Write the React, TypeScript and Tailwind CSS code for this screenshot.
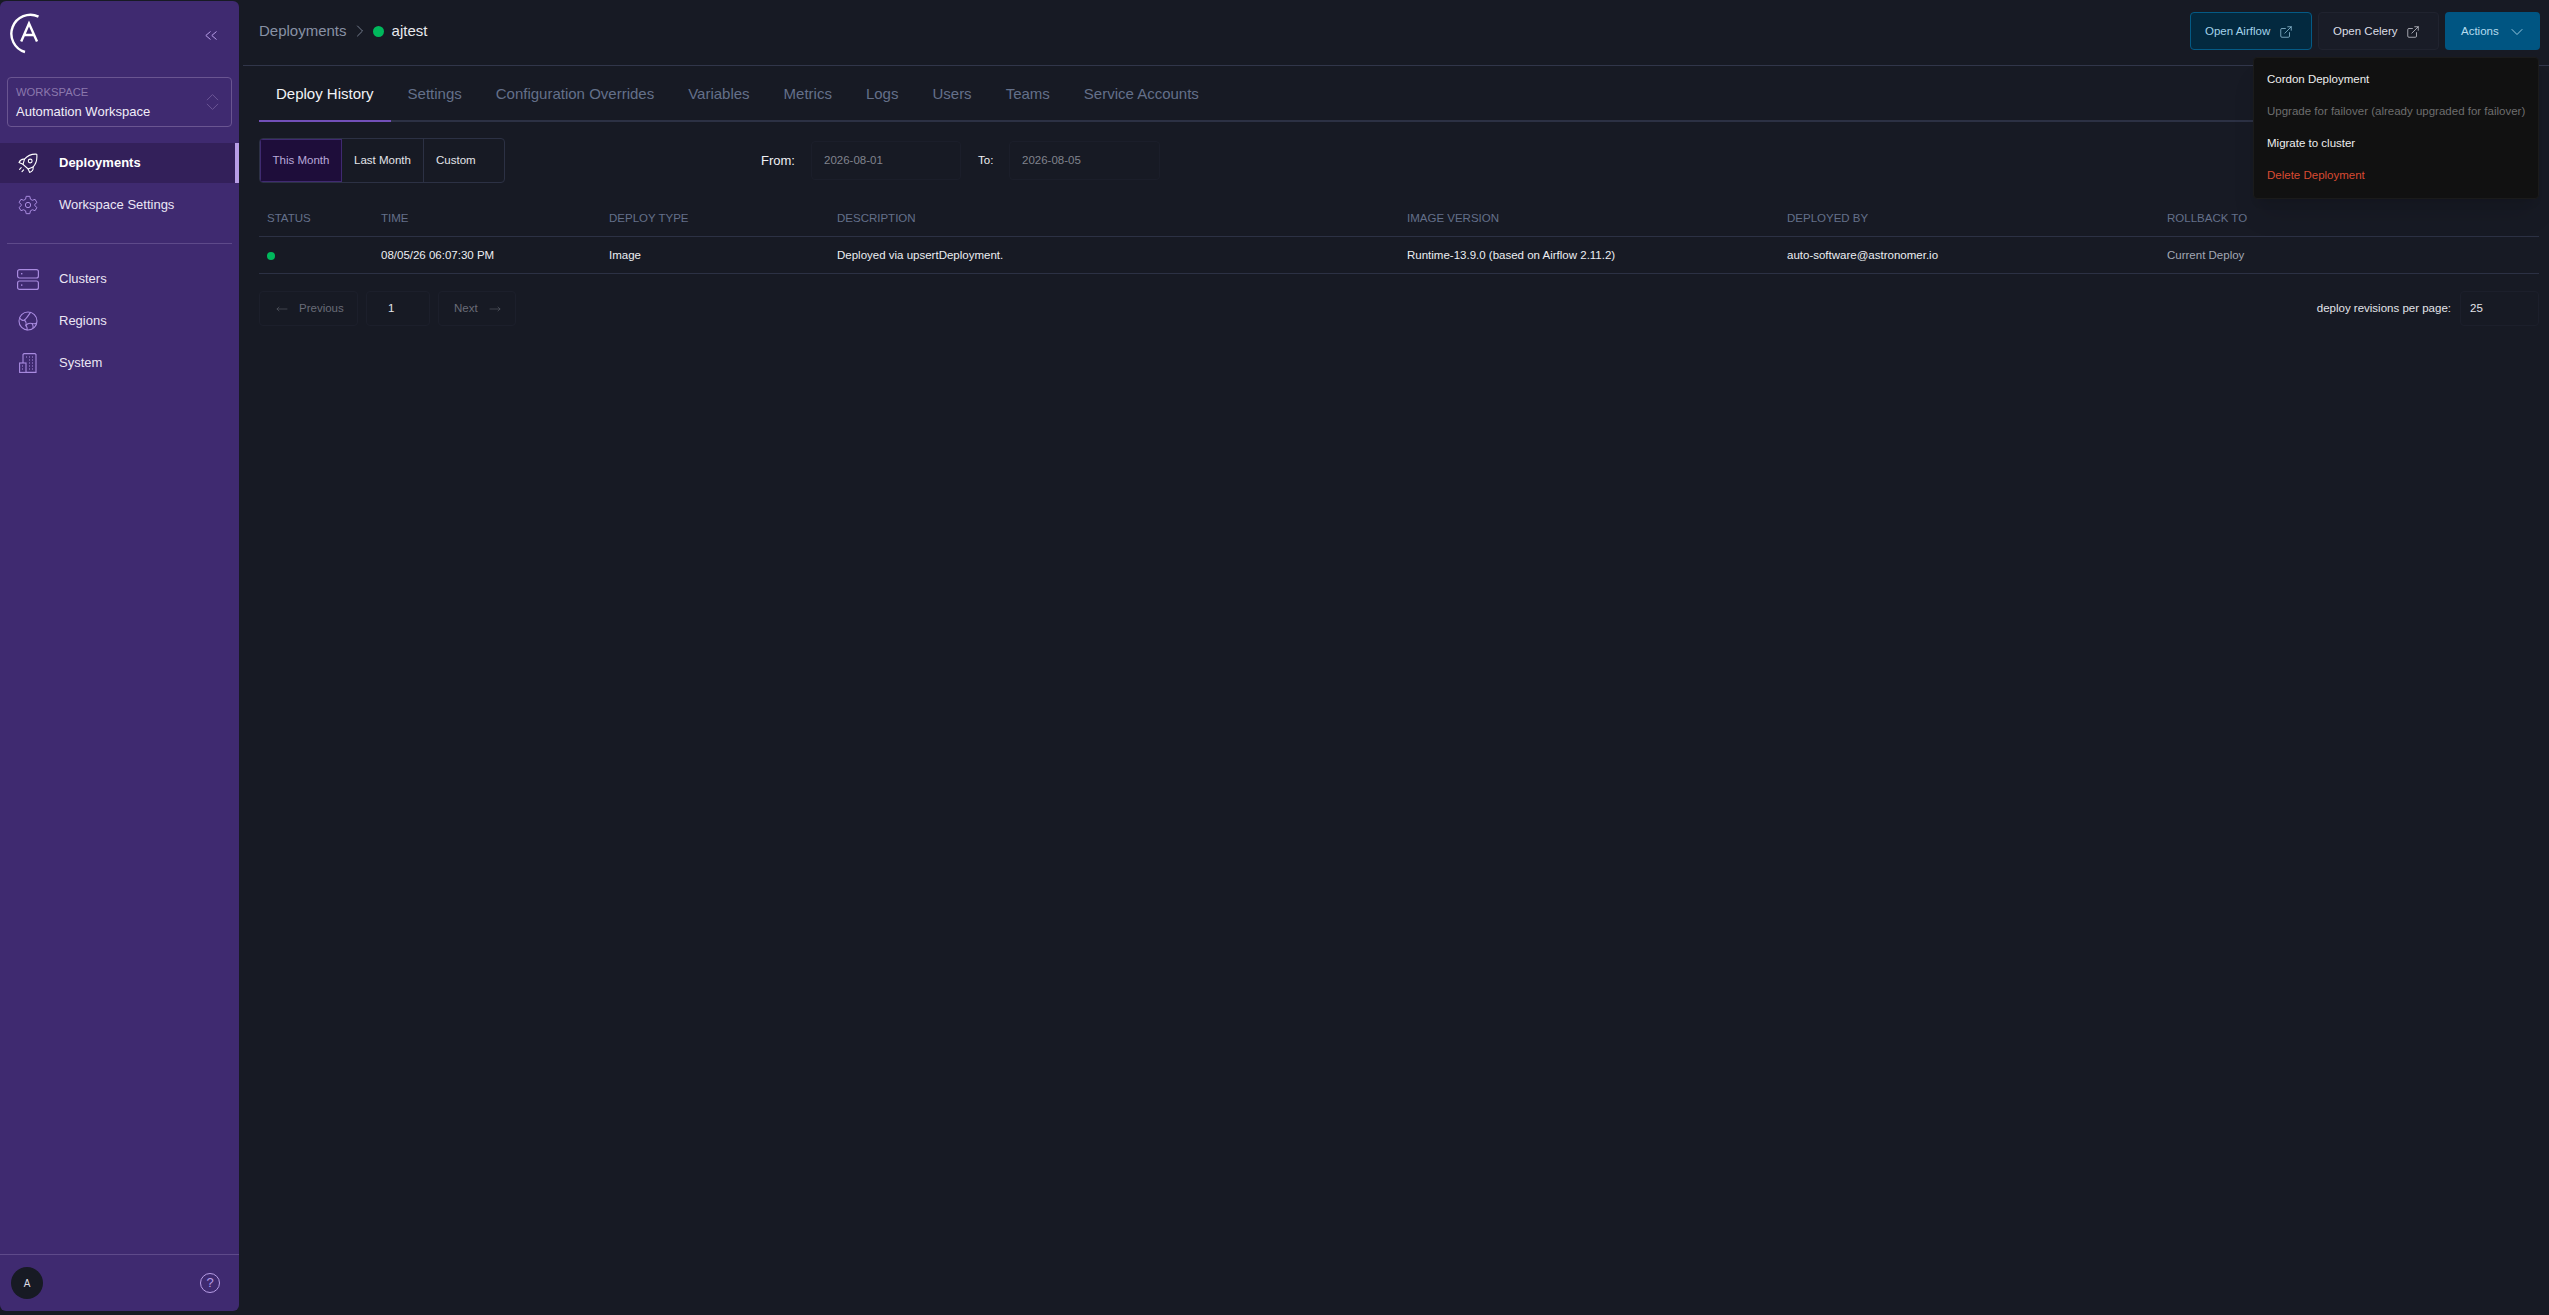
import React from 'react';
import { ChevronRight, ChevronDown, ExternalLink, MoveLeft, MoveRight } from 'lucide-react';

const tabs = ['Deploy History', 'Settings', 'Configuration Overrides', 'Variables', 'Metrics', 'Logs', 'Users', 'Teams', 'Service Accounts'];
const columns = ['Status', 'Time', 'Deploy Type', 'Description', 'Image Version', 'Deployed By', 'Rollback To'];

const Logo = () => (
  <svg width="34" height="42" viewBox="0 0 34 42" fill="none" stroke="white" strokeWidth="2.4">
    <path d="M 30.5 3.6 A 19 19 0 1 0 17 39" />
    <path d="M 13.2 28.4 L 21 10.5 L 29 28.4 M 15.5 22 L 26.8 22" strokeWidth="2.4" />
  </svg>
);

const CollapseIcon = () => (
  <svg width="12" height="9" viewBox="0 0 12 9" fill="none" stroke="#b79de6" strokeWidth="1">
    <path d="M 5.5 0.5 L 0.8 4.5 L 5.5 8.5 M 11.5 0.5 L 6.8 4.5 L 11.5 8.5" />
  </svg>
);

const RocketIcon = () => (
  <svg width="20" height="20" viewBox="0 0 20 20" fill="none" stroke="currentColor" strokeWidth="1.1" strokeLinejoin="round" strokeLinecap="round">
    <path d="M 18.8 1.2 C 13.5 0.8 9.5 2.6 6.5 6.2 L 5 11.3 L 10.2 16 L 15 14 C 18 11 19.3 6.5 18.8 1.2 Z" />
    <path d="M 6.5 6.2 C 4 5.8 2.2 7 1 9.5 L 5 11.3" />
    <path d="M 15 14 C 15.6 16.5 14.2 18.4 11.6 19.4 L 10.2 16" />
    <circle cx="12.2" cy="8" r="1.9" />
    <path d="M 3.2 14.6 L 1.6 16.4 M 5.6 16.8 L 4 18.6" />
  </svg>
);

const GearIcon = () => (
  <svg width="20" height="20" viewBox="0 0 24 24" fill="none" stroke="currentColor" strokeWidth="1.2" strokeLinejoin="round">
    <path d="M 9.8 1.6 H 14.2 L 14.9 5 L 17.2 6.3 L 20.5 5.2 L 22.7 9 L 20.1 11.3 V 12.7 L 22.7 15 L 20.5 18.8 L 17.2 17.7 L 14.9 19 L 14.2 22.4 H 9.8 L 9.1 19 L 6.8 17.7 L 3.5 18.8 L 1.3 15 L 3.9 12.7 V 11.3 L 1.3 9 L 3.5 5.2 L 6.8 6.3 L 9.1 5 Z" />
    <circle cx="12" cy="12" r="3.2" />
  </svg>
);

const ClustersIcon = () => (
  <svg width="22" height="22" viewBox="0 0 22 22" fill="none" stroke="currentColor" strokeWidth="1.2">
    <rect x="0.6" y="1.6" width="20.8" height="8.4" rx="2" />
    <rect x="0.6" y="13" width="20.8" height="8.4" rx="2" />
    <rect x="4" y="5" width="1.4" height="1.4" fill="currentColor" stroke="none" />
    <rect x="4" y="16.4" width="1.4" height="1.4" fill="currentColor" stroke="none" />
  </svg>
);

const GlobeIcon = () => (
  <svg width="20" height="20" viewBox="0 0 20 20" fill="none" stroke="currentColor" strokeWidth="1.1" strokeLinecap="round">
    <circle cx="10" cy="10" r="9" />
    <path d="M 1.8 7 C 3 9 5 10 6.5 9 C 8.5 7.5 10 5 12.5 1.4" />
    <path d="M 6.5 9 C 8 10.5 8.5 12 8 14 C 9.5 12.5 12 12 14 12.5 C 16 13 17.5 13 18.6 12" />
    <path d="M 8 14 C 9 16 9.5 17.5 9 19" />
    <path d="M 14 12.5 C 15 14 15.3 15.5 15 17" />
  </svg>
);

const BuildingIcon = () => (
  <svg width="18" height="20" viewBox="0 0 18 20" fill="none" stroke="currentColor" strokeWidth="1.1">
    <path d="M 4 10 V 1.6 L 5 0.6 H 16 L 17 1.6 V 19.4 H 7" />
    <rect x="0.6" y="10" width="6.4" height="9.4" />
    <g fill="currentColor" stroke="none">
      <rect x="7" y="3.5" width="1" height="1" /><rect x="10" y="3.5" width="1" height="1" /><rect x="13" y="3.5" width="1" height="1" />
      <rect x="10" y="6.5" width="1" height="1" /><rect x="13" y="6.5" width="1" height="1" />
      <rect x="10" y="9.5" width="1" height="1" /><rect x="13" y="9.5" width="1" height="1" />
      <rect x="10" y="12.5" width="1" height="1" /><rect x="13" y="12.5" width="1" height="1" />
      <rect x="10" y="15.5" width="1" height="1" /><rect x="13" y="15.5" width="1" height="1" />
      <rect x="3" y="12.5" width="1" height="1" /><rect x="3" y="15.5" width="1" height="1" />
    </g>
  </svg>
);

const NavItem = ({ icon, label, active }: { icon: React.ReactNode; label: string; active?: boolean }) => (
  <div className={`flex h-10 items-center ${active ? 'border-r-4 border-[#b79de6] bg-[#33205a] font-bold text-white' : 'text-[#ebe6f5]'}`}>
    <div className={`flex w-[59px] shrink-0 justify-center pr-1 ${active ? 'text-white' : 'text-[#a98be0]'}`}>{icon}</div>
    <span className="text-[13px]">{label}</span>
  </div>
);

const App = () => {
  return (
    <div className="flex h-[1315px] w-[2549px] overflow-hidden bg-[#171a24] font-['Liberation_Sans',sans-serif] text-white antialiased">
      {/* Sidebar */}
      <aside className="mt-px mb-[4px] flex w-[239px] shrink-0 flex-col rounded-md bg-[#3f2a70]">
        <div className="flex h-[76px] items-start justify-between pt-3 pl-2 pr-[22px]">
          <Logo />
          <div className="mt-[18px]"><CollapseIcon /></div>
        </div>
        <div className="mx-[7px] flex h-[50px] items-center justify-between rounded border border-[#6a5591] pl-2 pr-3">
          <div>
            <div className="text-[11.25px] leading-4 text-[#8b78ad]">WORKSPACE</div>
            <div className="mt-1 text-[13px] leading-4 text-[#f1edf8]">Automation Workspace</div>
          </div>
          <svg width="13" height="18" viewBox="0 0 14 18" fill="none" stroke="#6f5a98" strokeWidth="1">
            <path d="M 1 7 L 7 1 L 13 7 M 1 11 L 7 17 L 13 11" />
          </svg>
        </div>
        <nav className="mt-4 flex flex-col gap-[2px]">
          <NavItem icon={<RocketIcon />} label="Deployments" active />
          <NavItem icon={<GearIcon />} label="Workspace Settings" />
        </nav>
        <div className="mx-[7px] mt-[18px] mb-[15px] h-px bg-[#5e4a8a]" />
        <nav className="flex flex-col gap-[2px]">
          <NavItem icon={<ClustersIcon />} label="Clusters" />
          <NavItem icon={<GlobeIcon />} label="Regions" />
          <NavItem icon={<BuildingIcon />} label="System" />
        </nav>
        <div className="mt-auto flex h-[57px] items-center justify-between border-t border-[#5e4a8a] pr-[19px] pl-[11px]">
          <div className="flex h-8 w-8 items-center justify-center rounded-full bg-[#171a24] text-[10px] text-[#dcdce4]">A</div>
          <div className="flex h-5 w-5 items-center justify-center rounded-full border border-[#b79de6] text-[13px] text-[#b79de6]">?</div>
        </div>
      </aside>

      {/* Main */}
      <main className="flex min-w-0 flex-1 flex-col pl-1">
        <header className="flex h-[66px] items-start justify-between border-b border-[#31364a] pr-[9px]">
          <div className="flex h-[62px] items-center pl-4 text-[15px]">
            <span className="text-[#8891a4]">Deployments</span>
            <ChevronRight size={20} strokeWidth={1} className="mr-[3px] ml-[3px] text-[#8891a4]" />
            <span className="mr-2 h-[11px] w-[11px] rounded-full bg-[#00b85c]" />
            <span className="text-[#e8e9ee]">ajtest</span>
          </div>
          <div className="mt-3 flex gap-[6px] text-[11.5px]">
            <button className="flex h-[38px] w-[122px] items-center gap-[9px] rounded border border-[#045a85] bg-[#03293f] pt-px pl-[14px] text-[#a4d3ea]">
              Open Airflow <ExternalLink size={14} strokeWidth={1.2} />
            </button>
            <button className="flex h-[38px] w-[121px] items-center gap-[8px] rounded border border-[#20232f] bg-[#191c27] pt-px pl-[14px] text-[#dcdee6]">
              Open Celery <ExternalLink size={14} strokeWidth={1.2} />
            </button>
            <button className="flex h-[38px] w-[95px] items-center gap-[8px] rounded bg-[#005582] pt-px pl-4 text-[#b5dcef]">
              Actions <ChevronDown size={20} strokeWidth={1} />
            </button>
          </div>
        </header>

        {/* Tabs */}
        <div className="mr-[10px] ml-4 flex h-[56px] items-stretch gap-0 border-b-2 border-[#2c3144] text-[15px] text-[#64708a]">
          {tabs.map((tab, i) => (
            <div
              key={tab}
              className={`flex items-center px-[17px] pt-[2px] ${i === 0 ? '-mb-[2px] border-b-2 border-[#7250b8] text-[#f2f3f6]' : ''}`}
            >
              {tab}
            </div>
          ))}
        </div>

        {/* Date range */}
        <div className="mt-4 ml-4 flex h-[45px] items-center text-[11.5px]">
          <div className="flex h-[45px] w-[246px] overflow-hidden rounded border border-[#2c3144] pt-0 text-[#e3e4ea]">
            <div className="flex w-[82px] items-center justify-center border border-[#3f2a70] bg-[#1e0d3a] pt-px text-[#b9a8d8]">This Month</div>
            <div className="flex w-[82px] items-center justify-center border-r border-[#2c3144] pt-px">Last Month</div>
            <div className="flex flex-1 items-center pt-px pl-3">Custom</div>
          </div>
          <span className="ml-[256px] w-[50px] text-[13px] text-[#f0f0f4]">From:</span>
          <div className="flex h-[39px] w-[150px] items-center rounded border border-[#1b1e2a] pt-px pl-3 text-[#80838d]">2026-08-01</div>
          <span className="ml-[17px] w-[31px] text-[#f0f0f4]">To:</span>
          <div className="flex h-[39px] w-[151px] items-center rounded border border-[#1b1e2a] pt-px pl-3 text-[#80838d]">2026-08-05</div>
        </div>

        {/* Table */}
        <div className="mt-[18px] mr-[10px] ml-4 text-[11.5px]">
          <div className="grid h-[36px] grid-cols-[122px_228px_228px_570px_380px_380px_1fr] items-center border-b border-[#2c3144] text-[#64708a]">
            {columns.map((col, i) => (
              <div key={col} className={`uppercase ${i === 0 ? 'pl-2' : ''}`}>{col}</div>
            ))}
          </div>
          <div className="grid h-[37px] grid-cols-[122px_228px_228px_570px_380px_380px_1fr] items-center border-b border-[#2c3144] pt-px text-[#eceef2]">
            <div className="pl-2"><div className="h-2 w-2 rounded-full bg-[#00b85c]" /></div>
            <div>08/05/26 06:07:30 PM</div>
            <div>Image</div>
            <div>Deployed via upsertDeployment.</div>
            <div>Runtime-13.9.0 (based on Airflow 2.11.2)</div>
            <div>auto-software@astronomer.io</div>
            <div className="text-[#a3a8b4]">Current Deploy</div>
          </div>
        </div>

        {/* Pagination */}
        <div className="mt-[17px] mr-[10px] ml-4 flex items-center text-[11.5px]">
          <div className="flex h-[35px] w-[99px] items-center gap-[11px] rounded border border-[#1c1f2b] pl-4 text-[#696c77]">
            <MoveLeft size={12} strokeWidth={1} /> Previous
          </div>
          <div className="ml-2 flex h-[35px] w-[64px] items-center rounded border border-[#1c1f2b] pl-[21px] text-[#e3e4ea]">1</div>
          <div className="ml-2 flex h-[35px] w-[78px] items-center gap-[11px] rounded border border-[#1c1f2b] pl-[15px] text-[#696c77]">
            Next <MoveRight size={12} strokeWidth={1} />
          </div>
          <span className="mr-[9px] ml-auto text-[#e3e4ea]">deploy revisions per page:</span>
          <div className="flex h-[35px] w-[79px] items-center rounded border border-[#1c1f2b] pl-[9px] text-[#e3e4ea]">25</div>
        </div>
      </main>

      {/* Actions menu */}
      <div className="absolute top-[57px] left-[2253px] flex w-[286px] flex-col rounded border border-[#1b1b1b] bg-[#111111] py-[6px] text-[11.5px] shadow-xl">
        <div className="flex h-8 items-center px-[13px] text-[#eeeeee]">Cordon Deployment</div>
        <div className="flex h-8 items-center px-[13px] whitespace-nowrap text-[#6e6e6e]">Upgrade for failover (already upgraded for failover)</div>
        <div className="flex h-8 items-center px-[13px] text-[#eeeeee]">Migrate to cluster</div>
        <div className="flex h-8 items-center px-[13px] text-[#d94a32]">Delete Deployment</div>
      </div>
    </div>
  );
};

export default App;
